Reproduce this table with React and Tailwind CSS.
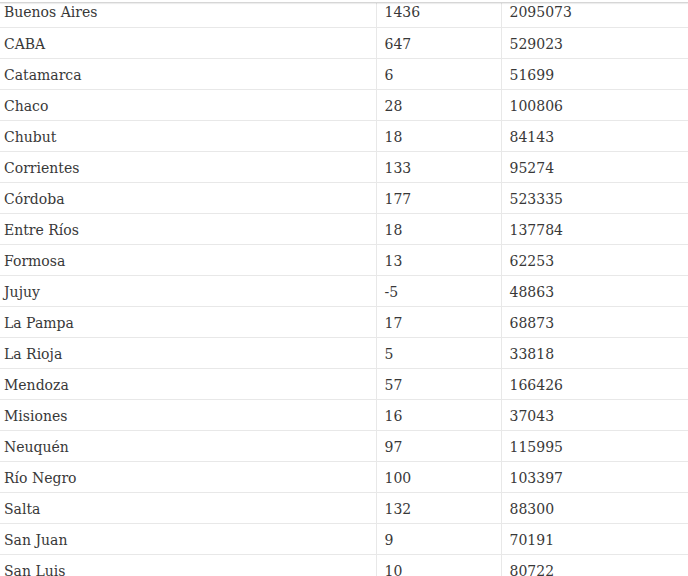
const rows = [
  ['Buenos Aires', '1436', '2095073'],
  ['CABA', '647', '529023'],
  ['Catamarca', '6', '51699'],
  ['Chaco', '28', '100806'],
  ['Chubut', '18', '84143'],
  ['Corrientes', '133', '95274'],
  ['Córdoba', '177', '523335'],
  ['Entre Ríos', '18', '137784'],
  ['Formosa', '13', '62253'],
  ['Jujuy', '-5', '48863'],
  ['La Pampa', '17', '68873'],
  ['La Rioja', '5', '33818'],
  ['Mendoza', '57', '166426'],
  ['Misiones', '16', '37043'],
  ['Neuquén', '97', '115995'],
  ['Río Negro', '100', '103397'],
  ['Salta', '132', '88300'],
  ['San Juan', '9', '70191'],
  ['San Luis', '10', '80722'],
]

export default function App() {
  return (
    <div className="relative h-[576px] w-[688px] overflow-hidden bg-white text-[14px] text-[#383838] font-['DejaVu_Serif',serif]">
      <div className="absolute left-0 right-0 top-0 z-10 h-[3px] border-b border-[#d6d6d6] bg-white shadow-[0_1px_1px_rgba(0,0,0,0.08)]" />
      <table className="-mt-[4px] w-[688px] table-fixed border-collapse">
        <colgroup>
          <col className="w-[376px]" />
          <col className="w-[125px]" />
          <col className="w-[187px]" />
        </colgroup>
        <tbody>
          {rows.map(([name, a, b]) => (
            <tr key={name} className="h-[31.06px] border-b border-[#e8e8e8]">
              <td className="pl-1 pt-[3px] align-middle">{name}</td>
              <td className="border-l border-[#e8e8e8] pl-2 pt-[3px] align-middle">{a}</td>
              <td className="border-l border-[#e8e8e8] pl-2 pt-[3px] align-middle">{b}</td>
            </tr>
          ))}
        </tbody>
      </table>
    </div>
  )
}
